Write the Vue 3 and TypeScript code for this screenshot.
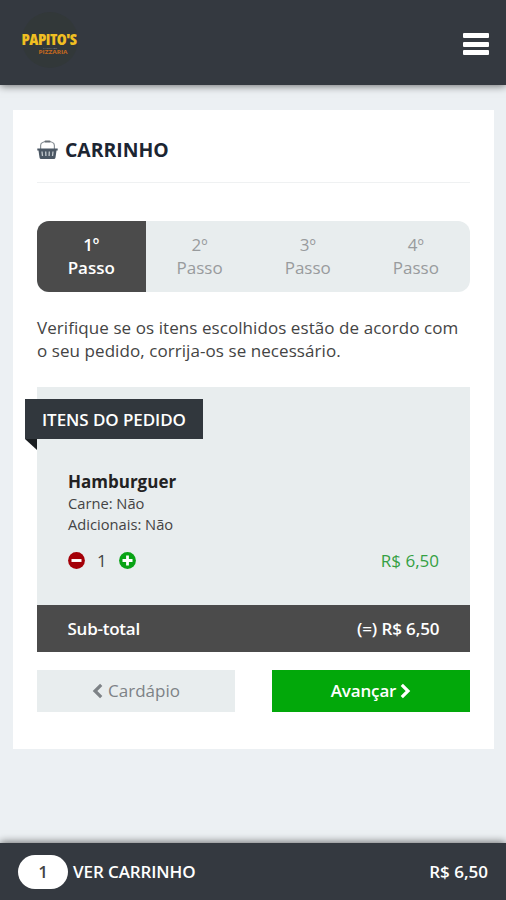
<script setup lang="ts">
import { ref, computed } from 'vue'

const quantity = ref(1)
const unitPrice = 6.5
const currentStep = 1
const steps = [1, 2, 3, 4]
const total = computed(() => 'R$ ' + (quantity.value * unitPrice).toFixed(2).replace('.', ','))

function decrease() {
  if (quantity.value > 1) quantity.value--
}
</script>

<template>
  <div class="page">
    <header class="topbar">
      <svg class="logo" viewBox="0 0 60 60" width="60" height="60">
        <circle cx="30" cy="30" r="28" fill="#323839" />
        <text class="logo-name" x="1.500" y="35.200" textLength="55.500" lengthAdjust="spacing">PAPITO'S</text>
        <text class="logo-small" x="23" y="38.500" textLength="14" lengthAdjust="spacingAndGlyphs">LANCHES</text>
        <text class="logo-sub" x="18.500" y="44" textLength="29" lengthAdjust="spacingAndGlyphs">PIZZARIA</text>
      </svg>
      <button class="menu" aria-label="Menu">
        <span></span><span></span><span></span>
      </button>
    </header>

    <main class="card">
      <h1 class="title">
        <svg width="21" height="20" viewBox="0 0 21 20">
          <path d="M3.600 9V5.500C3.600 2.500 6 1.500 10.500 1.500S17.400 2.500 17.400 5.500V9" fill="none" stroke="#8b9298" stroke-width="1.200" />
          <rect x="7.500" y="0.500" width="6" height="2" rx="1" fill="#697077" />
          <path d="M.3 8.600h20.400v2h-1.200l-1 6.900q-.2 1.500-1.600 1.500H4.100q-1.400 0-1.600-1.500l-1-6.900H.3z" fill="#4b5764" />
          <path d="M5 11.500l.5 4.500M8.700 11.500l.2 4.500M12.300 11.500l-.2 4.500M16 11.500l-.5 4.500" stroke="#c3c9ce" stroke-width="1.300" />
        </svg>
        <span>CARRINHO</span>
      </h1>

      <ol class="steps">
        <li v-for="step in steps" :key="step" :class="{ active: step === currentStep }">
          <span>{{ step }}º</span>
          <span>Passo</span>
        </li>
      </ol>

      <p class="hint">Verifique se os itens escolhidos estão de acordo com<br />o seu pedido, corrija-os se necessário.</p>

      <section class="order">
        <h2 class="ribbon">ITENS DO PEDIDO</h2>
        <div class="item">
          <h3>Hamburguer</h3>
          <p>Carne: Não</p>
          <p>Adicionais: Não</p>
          <div class="item-row">
            <div class="counter">
              <button aria-label="Diminuir" @click="decrease">
                <svg width="17" height="17" viewBox="0 0 17 17">
                  <circle cx="8.500" cy="8.500" r="8.400" fill="#a40008" />
                  <path d="M3.500 8.500h10" stroke="#fff" stroke-width="2.900" />
                </svg>
              </button>
              <span>{{ quantity }}</span>
              <button aria-label="Aumentar" @click="quantity++">
                <svg width="17" height="17" viewBox="0 0 17 17">
                  <circle cx="8.500" cy="8.500" r="8.400" fill="#08a315" />
                  <path d="M3.500 8.500h10M8.500 3.500v10" stroke="#fff" stroke-width="2.800" />
                </svg>
              </button>
            </div>
            <span class="price">{{ total }}</span>
          </div>
        </div>
        <div class="subtotal">
          <span class="label">Sub-total</span>
          <span class="amount">(=) {{ total }}</span>
        </div>
      </section>

      <div class="actions">
        <button class="back">
          <svg width="11" height="16" viewBox="0 0 11 16"><path d="M9.200 1.800L3 8l6.200 6.200" fill="none" stroke="currentColor" stroke-width="3.200" /></svg>
          <span>Cardápio</span>
        </button>
        <button class="next">
          <span>Avançar</span>
          <svg width="11" height="16" viewBox="0 0 11 16"><path d="M1.800 1.800L8 8l-6.200 6.200" fill="none" stroke="currentColor" stroke-width="3.200" /></svg>
        </button>
      </div>
    </main>

    <footer class="bottombar">
      <span class="badge">{{ quantity }}</span>
      <span class="view">VER CARRINHO</span>
      <span class="sum">{{ total }}</span>
    </footer>
  </div>
</template>

<style>
body {
  margin: 0;
  background: #ecf0f3;
}
</style>

<style scoped>
.page {
  display: flex;
  flex-direction: column;
  box-sizing: border-box;
  height: 900px;
  overflow: hidden;
  background: #ecf0f3;
  color: #444;
  font-family: 'Open Sans', sans-serif;
  font-size: 17px;
}
h1, h2, h3, p, ol {
  margin: 0;
  padding: 0;
}
button {
  margin: 0;
  padding: 0;
  border: 0;
  background: none;
  color: inherit;
  font: inherit;
}
svg {
  display: block;
  flex: none;
}
.topbar {
  display: flex;
  flex: none;
  align-items: center;
  justify-content: space-between;
  box-sizing: border-box;
  height: 85px;
  padding: 0 17px 0 20px;
  background: #343940;
  box-shadow: 0 1px 8px rgba(0, 0, 0, 0.55);
}
.logo {
  margin-top: -6px;
  overflow: visible;
}
.logo-name {
  fill: #f0bf22;
  font-size: 16px;
  font-weight: 800;
  font-stretch: 75%;
}
.logo-small {
  fill: #8a8f94;
  font-size: 2.500px;
}
.logo-sub {
  fill: #c86a1e;
  font-size: 5px;
  font-weight: 700;
}
.menu {
  display: flex;
  flex-direction: column;
  gap: 3.500px;
  margin-top: 3px;
}
.menu span {
  width: 26px;
  height: 5px;
  border-radius: 1px;
  background: #fff;
}
.card {
  box-sizing: border-box;
  width: 481px;
  height: 639px;
  margin: 25px 0 0 13px;
  padding: 0 24px;
  background: #fff;
}
.title {
  display: flex;
  align-items: center;
  gap: 7px;
  height: 64px;
  padding-top: 8px;
  border-bottom: 1px solid #eff1f2;
  color: #1c2532;
  font-size: 19.400px;
  font-weight: 700;
  line-height: 26px;
}
.steps {
  display: grid;
  grid-template-columns: 108.500px repeat(3, 1fr);
  height: 71px;
  margin-top: 38px;
  border-radius: 12px;
  overflow: hidden;
  background: #e8edee;
  color: #989b9d;
  line-height: 23px;
  list-style: none;
}
.steps li {
  display: flex;
  flex-direction: column;
  align-items: center;
  justify-content: center;
  padding-bottom: 1px;
}
.steps .active {
  background: #4b4b4b;
  color: #fff;
  font-weight: 600;
}
.hint {
  margin-top: 24px;
  letter-spacing: 0.070px;
  line-height: 23px;
  white-space: nowrap;
}
.order {
  display: flex;
  flex-direction: column;
  height: 265px;
  margin-top: 25px;
  background: #e8edee;
}
.ribbon {
  position: relative;
  box-sizing: border-box;
  width: 178px;
  height: 40px;
  margin: 12px 0 0 -12px;
  padding-left: 17px;
  background: #31373d;
  color: #fff;
  font-size: 17px;
  font-weight: 600;
  letter-spacing: -0.080px;
  line-height: 41px;
  white-space: nowrap;
}
.ribbon::after {
  position: absolute;
  top: 100%;
  left: 0;
  border-top: 11px solid #191d20;
  border-left: 12px solid transparent;
  content: '';
}
.item {
  flex: 1;
  padding: 32px 31px 0;
}
.item h3 {
  color: #222;
  font-size: 17px;
  font-weight: 700;
  line-height: 22px;
}
.item p {
  font-size: 14.700px;
  line-height: 20.500px;
}
.item-row {
  display: flex;
  align-items: center;
  justify-content: space-between;
  margin-top: 15px;
}
.counter {
  display: flex;
  align-items: center;
  gap: 12px;
}
.price {
  color: #34a043;
}
.subtotal {
  display: flex;
  align-items: center;
  justify-content: space-between;
  box-sizing: border-box;
  height: 47px;
  padding: 0 30.500px;
  background: #4b4b4b;
  color: #fff;
  font-weight: 600;
}
.label {
  letter-spacing: -0.250px;
}
.amount {
  letter-spacing: -0.100px;
}
.actions {
  display: grid;
  grid-template-columns: 198px 198px;
  justify-content: space-between;
  margin-top: 18px;
}
.actions button {
  display: flex;
  align-items: center;
  justify-content: center;
  box-sizing: border-box;
  gap: 5px;
  height: 42px;
  padding-bottom: 1px;
}
.actions .back {
  background: #e8edee;
  color: #7d8286;
}
.actions .next {
  background: #02a80a;
  color: #fff;
  font-weight: 600;
  gap: 4px;
  letter-spacing: -0.150px;
}
.bottombar {
  display: flex;
  flex: none;
  align-items: center;
  box-sizing: border-box;
  height: 57px;
  margin-top: auto;
  padding: 0 18px;
  background: #343940;
  box-shadow: 0 -1px 8px rgba(0, 0, 0, 0.55);
  color: #fff;
  font-weight: 600;
}
.view {
  letter-spacing: -0.100px;
}
.badge {
  width: 50px;
  height: 34px;
  margin-right: 5px;
  border-radius: 17px;
  background: #fff;
  color: #444;
  line-height: 34px;
  text-align: center;
}
.sum {
  margin-left: auto;
}
</style>
